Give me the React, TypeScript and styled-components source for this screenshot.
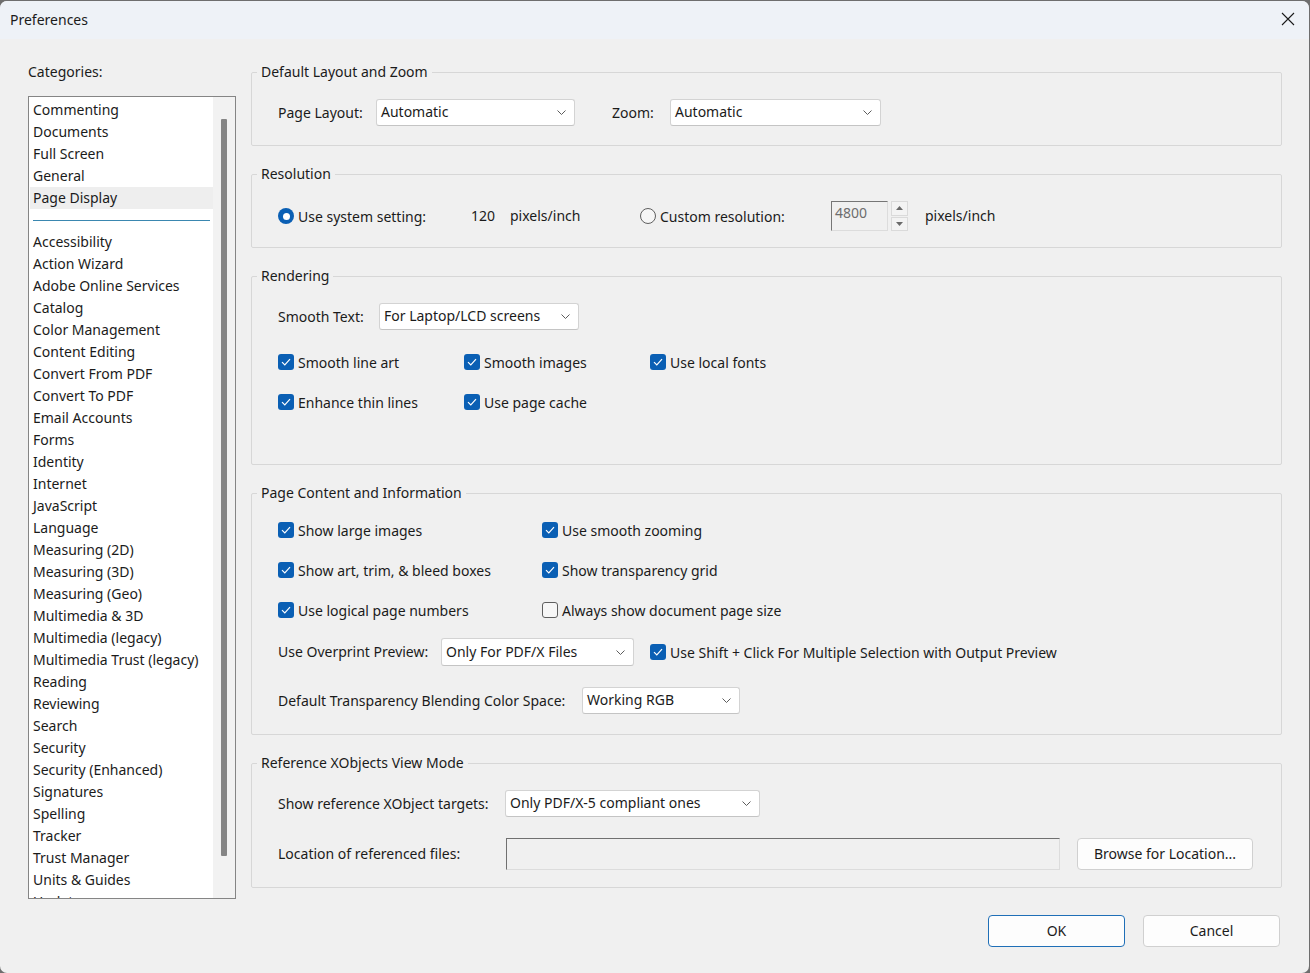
import React from 'react';
import styled, { createGlobalStyle, css } from 'styled-components';

const GlobalStyle = createGlobalStyle`
  html, body {
    margin: 0;
    padding: 0;
    background: #6e6e6e;
  }
  body {
    font-family: "Noto Sans", "Open Sans", sans-serif;
    font-size: 14px;
    color: #1b1b1b;
  }
  * {
    box-sizing: border-box;
  }
`;

const Window = styled.div`
  width: 1309px;
  height: 972px;
  margin: 1px 0 0 0;
  background: #f0f0f0;
  border-radius: 7px;
  overflow: hidden;
  display: flex;
  flex-direction: column;
`;

const TitleBar = styled.div`
  height: 38px;
  flex: none;
  display: flex;
  align-items: center;
  justify-content: space-between;
  padding: 0 0 2px 10px;
  background: #eef2f7;
  font-size: 14px;
`;

const CloseButton = styled.div`
  width: 42px;
  height: 36px;
  display: flex;
  align-items: center;
  justify-content: center;
`;

const Body = styled.div`
  display: flex;
  gap: 15px;
  padding: 23px 27px 0 28px;
`;

const LeftColumn = styled.div`
  width: 208px;
  flex: none;
  display: flex;
  flex-direction: column;
`;

const Caption = styled.div`
  line-height: 20px;
  margin-bottom: 14px;
`;

const ListBox = styled.div`
  height: 803px;
  border: 1px solid #858585;
  background: #ffffff;
  display: flex;
  overflow: hidden;
`;

const Items = styled.div`
  width: 184px;
  padding: 2px 0 0 1px;
  overflow: hidden;
`;

const Item = styled.div<{ $selected?: boolean }>`
  height: 22px;
  line-height: 22px;
  padding-left: 3px;
  white-space: nowrap;
  ${(p) =>
    p.$selected &&
    css`
      background: #eeeeee;
    `}
`;

const Separator = styled.div`
  height: 22px;
  display: flex;
  align-items: center;
  padding: 0 3px 0 3px;
  &::after {
    content: '';
    flex: 1;
    height: 1px;
    background: #3a87b0;
  }
`;

const ScrollTrack = styled.div`
  flex: 1;
  background: #f2f2f2;
  padding: 22px 0 0 8px;
`;

const ScrollThumb = styled.div`
  width: 6px;
  height: 737px;
  background: #858585;
  border-radius: 1px;
`;

const RightColumn = styled.div`
  flex: 1;
  display: flex;
  flex-direction: column;
  gap: 18px;
`;

const Group = styled.fieldset`
  margin: 0;
  padding: 0;
  min-width: 0;
  border: 1px solid #d7d7d7;
  border-radius: 2px;
`;

const Legend = styled.legend`
  margin-left: 5px;
  padding: 0 4px;
  line-height: 20px;
`;

const GroupBody = styled.div<{ $pt?: number; $pb?: number; $gap?: number }>`
  display: flex;
  flex-direction: column;
  padding: ${(p) => p.$pt ?? 17}px 26px ${(p) => p.$pb ?? 19}px 26px;
  gap: ${(p) => p.$gap ?? 20}px;
`;

const Row = styled.div<{ $h?: number; $mt?: number }>`
  display: flex;
  align-items: center;
  height: ${(p) => p.$h ?? 20}px;
  margin-top: ${(p) => p.$mt ?? 0}px;
`;

const Spacer = styled.span<{ $w: number }>`
  width: ${(p) => p.$w}px;
  flex: none;
`;

const Label = styled.span<{ $w?: number; $ml?: number }>`
  width: ${(p) => (p.$w ? `${p.$w}px` : 'auto')};
  margin-left: ${(p) => p.$ml ?? 0}px;
  flex: none;
  white-space: nowrap;
  line-height: 20px;
`;

const SelectBox = styled.div<{ $w: number; $h?: number }>`
  width: ${(p) => p.$w}px;
  height: ${(p) => p.$h ?? 27}px;
  flex: none;
  background: #ffffff;
  border: 1px solid #d3d3d3;
  border-bottom-color: #c4c4c4;
  border-radius: 3px;
  display: flex;
  align-items: center;
  justify-content: space-between;
  padding: 0 8px 0 4px;
  white-space: nowrap;
  span {
    margin-top: -2px;
  }
`;

const CheckGrid = styled.div<{ $cols: string }>`
  display: grid;
  grid-template-columns: ${(p) => p.$cols};
  row-gap: 20px;
`;

const CheckItem = styled.label<{ $w?: number }>`
  display: flex;
  align-items: center;
  gap: 4px;
  height: 20px;
  white-space: nowrap;
  width: ${(p) => (p.$w ? `${p.$w}px` : 'auto')};
  flex: none;
`;

const Box = styled.span<{ $checked: boolean }>`
  width: 16px;
  height: 16px;
  flex: none;
  border-radius: 3px;
  display: flex;
  align-items: center;
  justify-content: center;
  ${(p) =>
    p.$checked
      ? css`
          background: #0a5fb4;
        `
      : css`
          background: #f7f7f7;
          border: 1px solid #5f5f5f;
        `}
`;

const RadioCircle = styled.span<{ $checked: boolean }>`
  width: 16px;
  height: 16px;
  flex: none;
  border-radius: 50%;
  display: flex;
  align-items: center;
  justify-content: center;
  ${(p) =>
    p.$checked
      ? css`
          background: #0a5fb4;
          &::after {
            content: '';
            width: 7px;
            height: 7px;
            border-radius: 50%;
            background: #ffffff;
          }
        `
      : css`
          background: #f6f6f6;
          border: 1px solid #5f5f5f;
        `}
`;

const NumberField = styled.div`
  width: 57px;
  height: 30px;
  flex: none;
  background: #f0f0f0;
  border: 1px solid #dcdcdc;
  border-top-color: #767676;
  border-left-color: #767676;
  color: #6d6d6d;
  padding: 1px 0 0 3px;
  line-height: 20px;
`;

const Spinner = styled.div`
  width: 17px;
  height: 30px;
  margin-left: 3px;
  flex: none;
  display: flex;
  flex-direction: column;
  gap: 1px;
`;

const SpinHalf = styled.div`
  flex: 1;
  border: 1px solid #dadada;
  background: #f3f3f3;
  display: flex;
  align-items: center;
  justify-content: center;
`;

const TextField = styled.div<{ $w: number }>`
  width: ${(p) => p.$w}px;
  height: 32px;
  flex: none;
  background: #f0f0f0;
  border: 1px solid #dcdcdc;
  border-top-color: #707070;
  border-left-color: #707070;
`;

const Button = styled.div<{ $w: number; $default?: boolean }>`
  width: ${(p) => p.$w}px;
  height: 32px;
  flex: none;
  display: flex;
  align-items: center;
  justify-content: center;
  padding-bottom: 1px;
  background: #fdfdfd;
  border: 1px solid ${(p) => (p.$default ? '#1f6fb7' : '#d0d0d0')};
  border-radius: 4px;
  white-space: nowrap;
`;

const Footer = styled.div`
  display: flex;
  justify-content: flex-end;
  gap: 18px;
  margin-top: 16px;
  padding-right: 29px;
`;

const Chevron = () => (
  <svg width="9" height="5" viewBox="0 0 9 5">
    <polyline points="0.5,0.5 4.5,4.5 8.5,0.5" fill="none" stroke="#5c5c5c" strokeWidth="1" />
  </svg>
);

const Tick = () => (
  <svg width="10" height="8" viewBox="0 0 10 8">
    <polyline points="1,4.2 3.8,7 9,1.2" fill="none" stroke="#ffffff" strokeWidth="1.2" />
  </svg>
);

const Select = ({ w, h, value }: { w: number; h?: number; value: string }) => (
  <SelectBox $w={w} $h={h}>
    <span>{value}</span>
    <Chevron />
  </SelectBox>
);

const Check = ({ label, checked = true, w }: { label: string; checked?: boolean; w?: number }) => (
  <CheckItem $w={w}>
    <Box $checked={checked}>{checked && <Tick />}</Box>
    {label}
  </CheckItem>
);

const Radio = ({ label, checked, w }: { label: string; checked: boolean; w: number }) => (
  <CheckItem $w={w}>
    <RadioCircle $checked={checked} />
    {label}
  </CheckItem>
);

const topCategories = ['Commenting', 'Documents', 'Full Screen', 'General', 'Page Display'];

const otherCategories = [
  'Accessibility',
  'Action Wizard',
  'Adobe Online Services',
  'Catalog',
  'Color Management',
  'Content Editing',
  'Convert From PDF',
  'Convert To PDF',
  'Email Accounts',
  'Forms',
  'Identity',
  'Internet',
  'JavaScript',
  'Language',
  'Measuring (2D)',
  'Measuring (3D)',
  'Measuring (Geo)',
  'Multimedia & 3D',
  'Multimedia (legacy)',
  'Multimedia Trust (legacy)',
  'Reading',
  'Reviewing',
  'Search',
  'Security',
  'Security (Enhanced)',
  'Signatures',
  'Spelling',
  'Tracker',
  'Trust Manager',
  'Units & Guides',
  'Updater',
];

export default function App() {
  return (
    <>
      <GlobalStyle />
      <Window>
        <TitleBar>
          Preferences
          <CloseButton>
            <svg width="14" height="14" viewBox="0 0 14 14">
              <path d="M1 1 L13 13 M13 1 L1 13" stroke="#1b1b1b" strokeWidth="1.1" />
            </svg>
          </CloseButton>
        </TitleBar>

        <Body>
          <LeftColumn>
            <Caption>Categories:</Caption>
            <ListBox>
              <Items>
                {topCategories.map((c) => (
                  <Item key={c} $selected={c === 'Page Display'}>
                    {c}
                  </Item>
                ))}
                <Separator />
                {otherCategories.map((c) => (
                  <Item key={c}>{c}</Item>
                ))}
              </Items>
              <ScrollTrack>
                <ScrollThumb />
              </ScrollTrack>
            </ListBox>
          </LeftColumn>

          <RightColumn>
            <Group>
              <Legend>Default Layout and Zoom</Legend>
              <GroupBody>
                <Row $h={27}>
                  <Label $w={98}>Page Layout:</Label>
                  <Select w={199} value="Automatic" />
                  <Label $w={58} $ml={37}>
                    Zoom:
                  </Label>
                  <Select w={211} value="Automatic" />
                </Row>
              </GroupBody>
            </Group>

            <Group>
              <Legend>Resolution</Legend>
              <GroupBody $pb={16}>
                <Row $h={30}>
                  <Radio label="Use system setting:" checked w={193} />
                  <Label $w={39}>120</Label>
                  <Label $w={130}>pixels/inch</Label>
                  <Radio label="Custom resolution:" checked={false} w={191} />
                  <NumberField>4800</NumberField>
                  <Spinner>
                    <SpinHalf>
                      <svg width="7" height="4" viewBox="0 0 7 4">
                        <polygon points="0,4 3.5,0 7,4" fill="#6a6a6a" />
                      </svg>
                    </SpinHalf>
                    <SpinHalf>
                      <svg width="7" height="4" viewBox="0 0 7 4">
                        <polygon points="0,0 3.5,4 7,0" fill="#6a6a6a" />
                      </svg>
                    </SpinHalf>
                  </Spinner>
                  <Label $ml={17}>pixels/inch</Label>
                </Row>
              </GroupBody>
            </Group>

            <Group>
              <Legend>Rendering</Legend>
              <GroupBody $pb={52} $gap={22}>
                <Row $h={27}>
                  <Label $w={101}>Smooth Text:</Label>
                  <Select w={200} value="For Laptop/LCD screens" />
                </Row>
                <CheckGrid $cols="186px 186px auto">
                  <Check label="Smooth line art" />
                  <Check label="Smooth images" />
                  <Check label="Use local fonts" />
                  <Check label="Enhance thin lines" />
                  <Check label="Use page cache" />
                </CheckGrid>
              </GroupBody>
            </Group>

            <Group>
              <Legend>Page Content and Information</Legend>
              <GroupBody $pt={17} $pb={20} $gap={0}>
                <CheckGrid $cols="264px auto">
                  <Check label="Show large images" />
                  <Check label="Use smooth zooming" />
                  <Check label="Show art, trim, & bleed boxes" />
                  <Check label="Show transparency grid" />
                  <Check label="Use logical page numbers" />
                  <Check label="Always show document page size" checked={false} />
                </CheckGrid>
                <Row $h={28} $mt={18}>
                  <Label $w={163}>Use Overprint Preview:</Label>
                  <Select w={193} h={28} value="Only For PDF/X Files" />
                  <Spacer $w={16} />
                  <Check label="Use Shift + Click For Multiple Selection with Output Preview" />
                </Row>
                <Row $h={27} $mt={21}>
                  <Label $w={304}>Default Transparency Blending Color Space:</Label>
                  <Select w={158} value="Working RGB" />
                </Row>
              </GroupBody>
            </Group>

            <Group>
              <Legend>Reference XObjects View Mode</Legend>
              <GroupBody $pb={17} $gap={21}>
                <Row $h={27}>
                  <Label $w={227}>Show reference XObject targets:</Label>
                  <Select w={255} value="Only PDF/X-5 compliant ones" />
                </Row>
                <Row $h={32}>
                  <Label $w={228}>Location of referenced files:</Label>
                  <TextField $w={554} />
                  <Spacer $w={17} />
                  <Button $w={176}>Browse for Location...</Button>
                </Row>
              </GroupBody>
            </Group>
          </RightColumn>
        </Body>

        <Footer>
          <Button $w={137} $default>
            OK
          </Button>
          <Button $w={137}>Cancel</Button>
        </Footer>
      </Window>
    </>
  );
}
